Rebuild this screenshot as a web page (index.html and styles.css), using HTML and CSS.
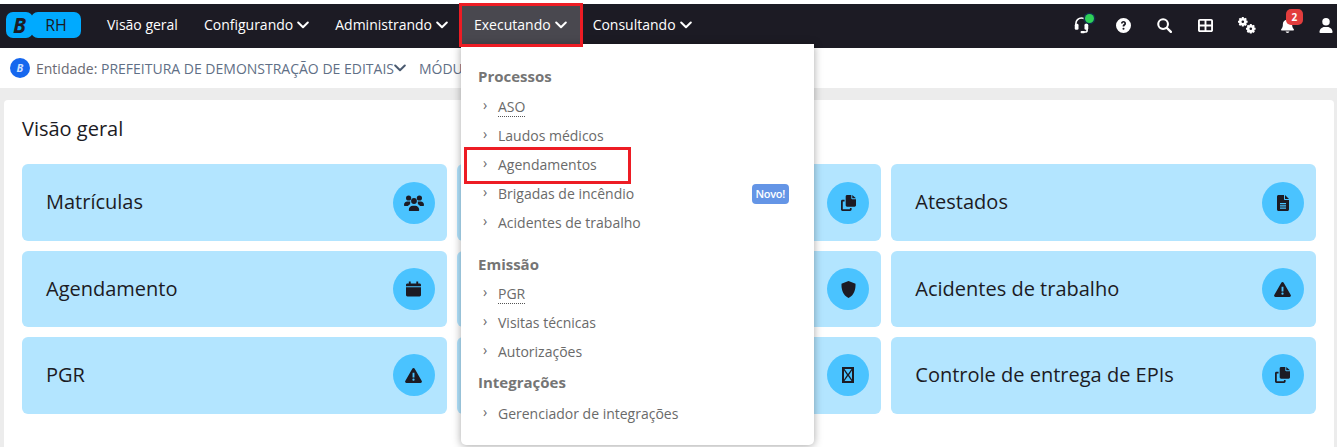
FILE: index.html
```html
<!DOCTYPE html>
<html lang="pt-BR">
<head>
  <meta charset="UTF-8">
  <meta name="viewport" content="width=device-width, initial-scale=1.0">
  <title>BRH</title>
  <link rel="stylesheet" href="styles.css">
</head>
<body>
  <svg class="sprite" xmlns="http://www.w3.org/2000/svg">
    <symbol id="i-chev" viewBox="0 0 12 8"><path d="M1.200 1.500 6 6.200l4.800-4.700" fill="none" stroke="currentColor" stroke-width="2" stroke-linecap="round" stroke-linejoin="round"/></symbol>
    <symbol id="i-users" viewBox="0 0 20 16"><circle cx="4.600" cy="3" r="2.600"/><circle cx="15.400" cy="3" r="2.600"/><circle cx="10" cy="6" r="2.900"/><path d="M0 10c0-2 1.400-3.400 3.300-3.400h2.200c.3 0 .6.100.9.200-.4.700-.4 1.500-.2 2.400-1 .3-1.800 1-2.200 1.800H1c-.6 0-1-.4-1-1zM20 10c0-2-1.400-3.400-3.300-3.400h-2.200c-.3 0-.6.100-.9.200.4.700.4 1.500.2 2.400 1 .3 1.800 1 2.200 1.800H19c.6 0 1-.4 1-1zM4.800 15c0-2.500 1.800-4.300 4-4.300h2.400c2.200 0 4 1.800 4 4.300 0 .6-.4 1-1 1H5.800c-.6 0-1-.4-1-1z"/></symbol>
    <symbol id="i-cal" viewBox="0 0 16 16"><path d="M3 0h2v2h6V0h2v2h1.500C15.300 2 16 2.700 16 3.500V5H0V3.500C0 2.700.7 2 1.500 2H3zM0 6h16v8.500c0 .8-.7 1.500-1.500 1.500h-13C.7 16 0 15.300 0 14.500z"/></symbol>
    <symbol id="i-shield" viewBox="0 0 16 18"><path d="M8 0 .5 2.800C.3 9 2 15 8 18c6-3 7.700-9 7.500-15.200z"/></symbol>
    <symbol id="i-warn" viewBox="0 0 18 16"><path fill-rule="evenodd" d="M9 0c.5 0 1 .3 1.300.8l7.500 13c.5.900-.1 2.200-1.300 2.200h-15C.3 16-.3 14.700.2 13.800L7.700.8C8 .3 8.500 0 9 0zm-1 5v5h2V5zm1 6.300a1.200 1.200 0 1 0 0 2.400 1.200 1.200 0 0 0 0-2.400z"/></symbol>
    <symbol id="i-copy" viewBox="0 0 16 17"><path d="M6.500 0H11v3.500c0 .5.400 1 1 1h4v6.500c0 .8-.7 1.500-1.500 1.500h-8C5.700 12.500 5 11.800 5 11V1.500C5 .7 5.700 0 6.500 0zM12 0l4 3.500h-4zM1.500 5H3.800v1.800H1.900v8.400h7.600v-1.500h1.800v1.800c0 .8-.7 1.500-1.500 1.500H1.500C.7 17 0 16.300 0 15.500v-9C0 5.700.7 5 1.500 5z"/></symbol>
    <symbol id="i-file" viewBox="0 0 12 16"><path fill-rule="evenodd" d="M1.500 0H7v4c0 .6.400 1 1 1h4v9.500c0 .8-.7 1.500-1.500 1.500h-9C.7 16 0 15.300 0 14.500v-13C0 .7.700 0 1.500 0zM3 8v1.200h6V8zm0 2.300v1.200h6v-1.200zm0 2.300v1.200h6v-1.200zM8 0l4 4H8z"/></symbol>
    <symbol id="i-box" viewBox="0 0 12 16"><path fill-rule="evenodd" d="M0 0h12v16H0zm2 2v12h8V2z"/><path d="M2.500 2 6 7l3.500-5h.8v1L7 8l3.300 5v1h-.8L6 9l-3.500 5h-.8v-1L5 8 1.700 3V2z"/></symbol>
    <symbol id="i-headset" viewBox="0 0 16 18"><path d="M2 8V7a6 6 0 0 1 12 0v7c0 1.300-.8 2-2 2H8" fill="none" stroke="currentColor" stroke-width="1.700"/><rect x="0.800" y="7.200" width="4" height="6.300" rx="1.400"/><rect x="11.200" y="7.200" width="4" height="6.300" rx="1.400"/><rect x="7" y="14.800" width="4.500" height="2.400" rx="1"/></symbol>
    <symbol id="i-help" viewBox="0 0 16 16"><path fill-rule="evenodd" d="M8 0a8 8 0 1 1 0 16A8 8 0 0 1 8 0zM5.300 5.800h1.800c0-.6.400-1 .9-1s.9.400.9.900c0 .4-.2.600-.7 1-.8.500-1.100 1-1.100 1.800v.5h1.800V9c0-.4.200-.6.700-1 .7-.5 1.100-1.100 1.100-2.100C10.700 4.300 9.600 3.300 8 3.300c-1.600 0-2.700 1-2.700 2.500zM8 10.400a1.100 1.100 0 1 0 0 2.200 1.100 1.100 0 0 0 0-2.200z"/></symbol>
    <symbol id="i-search" viewBox="0 0 16 16"><circle cx="6.500" cy="6.500" r="5.200" fill="none" stroke="currentColor" stroke-width="2.200"/><path d="m10.500 10.500 4.300 4.300" stroke="currentColor" stroke-width="2.400" stroke-linecap="round"/></symbol>
    <symbol id="i-grid" viewBox="0 0 16 14"><path fill-rule="evenodd" d="M2 0h12c1.100 0 2 .9 2 2v10c0 1.100-.9 2-2 2H2c-1.100 0-2-.9-2-2V2C0 .9.900 0 2 0zm0 2v4h5V2zm7 0v4h5V2zM2 8v4h5V8zm7 0v4h5V8z"/></symbol>
    <symbol id="i-cogs" viewBox="0 0 18 17"><circle cx="4.800" cy="4.800" r="2.600" fill="none" stroke="currentColor" stroke-width="2.600"/><path d="M4.800 0v2M4.800 7.600v2M0 4.800h2M7.600 4.800h2M1.400 1.400l1.400 1.400M6.800 6.800l1.400 1.400M1.400 8.200l1.400-1.400M6.800 2.800l1.400-1.400" stroke="currentColor" stroke-width="2"/><circle cx="12.800" cy="11.800" r="2.600" fill="none" stroke="currentColor" stroke-width="2.600"/><path d="M12.800 7v2M12.800 14.600v2M8 11.800h2M15.600 11.800h2M9.400 8.400l1.400 1.400M14.800 13.800l1.400 1.400M9.400 15.200l1.400-1.400M14.800 9.800l1.400-1.400" stroke="currentColor" stroke-width="2"/></symbol>
    <symbol id="i-bell" viewBox="0 0 14 16"><path d="M7 0c.6 0 1 .4 1 1v.7c2.300.4 4 2.400 4 4.800v1c0 1.500.5 2.900 1.400 4l.4.500c.4.600 0 1.500-.8 1.500H1c-.8 0-1.200-.9-.8-1.500l.4-.5C1.500 10.400 2 9 2 7.500v-1c0-2.400 1.700-4.400 4-4.800V1c0-.6.400-1 1-1zM5 14.500h4c0 1-1 1.500-2 1.500s-2-.5-2-1.500z"/></symbol>
    <symbol id="i-user" viewBox="0 0 14 16"><circle cx="7" cy="4" r="4"/><path d="M5.500 9.500h3C11.500 9.500 14 12 14 15c0 .6-.4 1-1 1H1c-.6 0-1-.4-1-1 0-3 2.500-5.500 5.500-5.500z"/></symbol>
  </svg>

  <header class="topbar">
    <div class="logo"><span class="logo-b">B</span><span class="logo-rh">RH</span></div>
    <nav class="menu">
      <a class="menu-item">Visão geral</a>
      <a class="menu-item">Configurando<svg class="chev"><use href="#i-chev"/></svg></a>
      <a class="menu-item">Administrando<svg class="chev"><use href="#i-chev"/></svg></a>
      <a class="menu-item active">Executando<svg class="chev"><use href="#i-chev"/></svg></a>
      <a class="menu-item">Consultando<svg class="chev"><use href="#i-chev"/></svg></a>
    </nav>
    <div class="tools">
      <span class="tool"><svg class="headset"><use href="#i-headset"/></svg><i class="online"></i></span>
      <span class="tool"><svg class="t16"><use href="#i-help"/></svg></span>
      <span class="tool"><svg class="t16"><use href="#i-search"/></svg></span>
      <span class="tool"><svg class="t16"><use href="#i-grid"/></svg></span>
      <span class="tool"><svg class="cogs"><use href="#i-cogs"/></svg></span>
      <span class="tool"><svg class="bell"><use href="#i-bell"/></svg><b class="count">2</b></span>
      <span class="tool last"><svg class="user"><use href="#i-user"/></svg></span>
    </div>
  </header>

  <div class="subbar">
    <span class="entity-badge">B</span>
    <span class="entity"><span class="label">Entidade:</span> PREFEITURA DE DEMONSTRAÇÃO DE EDITAIS</span>
    <svg class="chev-sm"><use href="#i-chev"/></svg>
    <span class="entity module">MÓDULO</span>
  </div>

  <main class="content">
    <section class="panel">
      <h1>Visão geral</h1>
      <div class="cards">
        <div class="card"><span>Matrículas</span><i class="badge"><svg class="users"><use href="#i-users"/></svg></i></div>
        <div class="card"><i class="badge"><svg class="copy"><use href="#i-copy"/></svg></i></div>
        <div class="card"><span>Atestados</span><i class="badge"><svg class="file"><use href="#i-file"/></svg></i></div>
        <div class="card"><span>Agendamento</span><i class="badge"><svg class="cal"><use href="#i-cal"/></svg></i></div>
        <div class="card"><i class="badge"><svg class="shield"><use href="#i-shield"/></svg></i></div>
        <div class="card"><span>Acidentes de trabalho</span><i class="badge"><svg class="warn"><use href="#i-warn"/></svg></i></div>
        <div class="card"><span>PGR</span><i class="badge"><svg class="warn"><use href="#i-warn"/></svg></i></div>
        <div class="card"><i class="badge"><svg class="file"><use href="#i-box"/></svg></i></div>
        <div class="card"><span>Controle de entrega de EPIs</span><i class="badge"><svg class="copy"><use href="#i-copy"/></svg></i></div>
      </div>
    </section>
  </main>

  <!-- menu aberto -->
  <div class="dropdown">
    <h4>Processos</h4>
    <ul class="group-first">
      <li><u>ASO</u></li>
      <li>Laudos médicos</li>
      <li>Agendamentos</li>
      <li>Brigadas de incêndio<em>Novo!</em></li>
      <li>Acidentes de trabalho</li>
    </ul>
    <h4 class="close">Emissão</h4>
    <ul>
      <li><u>PGR</u></li>
      <li>Visitas técnicas</li>
      <li>Autorizações</li>
    </ul>
    <h4 class="far">Integrações</h4>
    <ul>
      <li>Gerenciador de integrações</li>
    </ul>
  </div>

  <!-- marcacoes vermelhas -->
  <div class="mark mark-menu"></div>
  <div class="mark mark-item"></div>
</body>
</html>
```

FILE: styles.css
```css
* {
  box-sizing: border-box;
}
html, body {
  margin: 0;
  height: 100%;
  overflow: hidden;
}
body {
  padding-top: 4px;
  background: #fff;
  font-family: "Open Sans", "Noto Sans", sans-serif;
  color: #1c1b24;
}
.sprite {
  display: none;
}
svg {
  fill: currentColor;
}

.topbar {
  display: flex;
  align-items: center;
  height: 44px;
  padding-left: 6px;
  background: #1c1b24;
  color: #fff;
}
.logo {
  display: flex;
  height: 26px;
  width: 75px;
  margin-bottom: 2px;
}
.logo-b {
  width: 27px;
  border-radius: 7px;
  background: #00aaff;
  color: #1c1b24;
  font: italic 700 21px/26px "Open Sans", sans-serif;
  text-align: center;
}
.logo-rh {
  flex: 1;
  margin-left: -2px;
  border-radius: 7px;
  background: #00aaff;
  color: #1c1b24;
  font-size: 16px;
  line-height: 26px;
  text-align: center;
}
.menu {
  display: flex;
  height: 100%;
  margin-left: 13px;
}
.menu-item {
  display: flex;
  align-items: center;
  gap: 4px;
  padding: 0 13px 3px;
  font-size: 14px;
}
.menu-item.active {
  background: #49484f;
}
.chev {
  width: 12px;
  height: 8px;
}
.tools {
  display: flex;
  align-items: center;
  gap: 17.200px;
  margin-left: auto;
  margin-right: -1px;
}
.tool {
  position: relative;
  display: flex;
  justify-content: center;
  align-items: center;
  width: 24px;
  height: 44px;
  padding-bottom: 2px;
}
.tool.last {
  margin-left: -3px;
}
.t16 {
  width: 15px;
  height: 15px;
}
.headset {
  width: 15px;
  height: 17px;
}
.cogs {
  width: 18px;
  height: 17px;
}
.bell {
  width: 13px;
  height: 15px;
}
.user {
  width: 14px;
  height: 15px;
}
.online {
  position: absolute;
  left: 15px;
  top: 10px;
  width: 9px;
  height: 9px;
  border-radius: 50%;
  background: #2ed158;
  box-shadow: 0 0 0 1.500px #12304a;
}
.count {
  position: absolute;
  left: 10px;
  top: 5px;
  width: 17px;
  height: 16px;
  border-radius: 5px;
  background: #e23d3d;
  color: #fff;
  font-size: 10px;
  line-height: 16px;
  text-align: center;
}

.subbar {
  display: flex;
  align-items: center;
  height: 40px;
  padding-left: 10px;
  font-size: 14px;
  color: #6a6a72;
}
.entity-badge {
  width: 20px;
  height: 20px;
  margin-right: 6px;
  border-radius: 50%;
  background: #1667ee;
  color: #cfe0ff;
  font: italic 700 11px/20px "Open Sans", sans-serif;
  text-align: center;
}
.entity {
  color: #5f6f86;
  white-space: nowrap;
}
.entity .label {
  color: #6a6a72;
}
.chev-sm {
  width: 12px;
  height: 8px;
  color: #4a5a70;
}
.module {
  margin-left: 13px;
}

.content {
  padding: 12px 3px 0 4px;
  background: #ececec;
  height: 359px;
}
.panel {
  height: 100%;
  padding: 15px 18px 0;
  border-radius: 4px 4px 0 0;
  background: #fff;
}
h1 {
  margin: 0 0 21.400px;
  font-size: 20px;
  font-weight: 400;
  line-height: 28px;
}
.cards {
  display: grid;
  grid-template-columns: repeat(3, 1fr);
  grid-auto-rows: 76.670px;
  gap: 9.670px 10px;
}
.card {
  display: flex;
  align-items: center;
  padding: 0 12px 0 24px;
  border-radius: 6px;
  background: #b3e5ff;
  font-size: 20px;
}
.card span {
  margin-bottom: 2px;
}
.badge {
  display: flex;
  justify-content: center;
  align-items: center;
  width: 42px;
  height: 42px;
  margin-left: auto;
  border-radius: 50%;
  background: #4ac3ff;
}
.users {
  width: 20px;
  height: 16px;
}
.copy {
  width: 15px;
  height: 16px;
}
.file {
  width: 12px;
  height: 16px;
}
.cal {
  width: 15px;
  height: 16px;
}
.shield {
  width: 15px;
  height: 17px;
}
.warn {
  width: 17px;
  height: 15px;
}

.dropdown {
  position: absolute;
  left: 461px;
  top: 44px;
  width: 353px;
  height: 401px;
  padding: 21px 25px 0 17px;
  border-radius: 0 0 5px 5px;
  background: #fff;
  box-shadow: 0 1px 8px rgba(0, 0, 0, .35);
  color: #6a6a6a;
  font-size: 14px;
}
.dropdown h4 {
  margin: 0 0 5px;
  font-size: 15px;
  font-weight: 700;
  line-height: 22px;
  color: #757575;
}
.dropdown h4.close {
  margin-bottom: 4px;
}
.dropdown h4.far {
  margin-bottom: 6px;
}
.dropdown ul {
  margin: 0 0 5px;
  padding: 0;
  list-style: none;
}
.dropdown ul.group-first {
  margin-bottom: 16px;
}
.dropdown li {
  position: relative;
  display: flex;
  align-items: center;
  justify-content: space-between;
  height: 29px;
  padding-left: 20px;
}
.dropdown li::before {
  content: "›";
  position: absolute;
  left: 5px;
  top: 3px;
  font-size: 14px;
}
.dropdown u {
  margin-top: 2px;
  text-decoration: none;
  border-bottom: 1px dotted #555;
  line-height: 18px;
}
.dropdown em {
  padding: 0 4px;
  border-radius: 4px;
  background: #6495e6;
  color: #fff;
  font-size: 11px;
  font-style: normal;
  font-weight: 600;
  letter-spacing: -.3px;
  line-height: 20px;
}

.mark {
  position: absolute;
  border: 3px solid #ed1c24;
}
.mark-menu {
  left: 459px;
  top: 3px;
  width: 124px;
  height: 44px;
}
.mark-item {
  left: 464px;
  top: 147px;
  width: 167px;
  height: 37px;
}
```
